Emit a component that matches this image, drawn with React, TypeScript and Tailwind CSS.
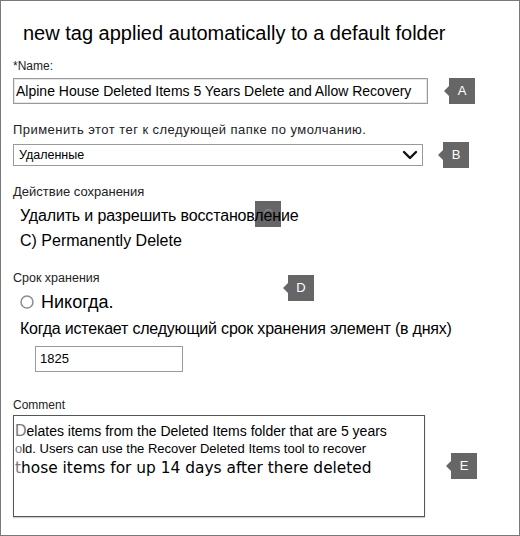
import React from "react";

function Badge({ letter, className = "", notch = true }: { letter: string; className?: string; notch?: boolean }) {
  return (
    <div className={"relative flex h-[26px] w-[26px] shrink-0 items-center justify-center bg-[#666666] text-[13px] " + (className || "text-white")}>
      {notch && (
        <span className="absolute left-[-5px] top-1/2 -translate-y-1/2 border-y-[5px] border-r-[5px] border-y-transparent border-r-[#666666]" />
      )}
      {letter}
    </div>
  );
}

function Chevron() {
  return (
    <svg width="16" height="10" viewBox="0 0 16 10" className="shrink-0">
      <polyline points="2,2 8,8 14,2" fill="none" stroke="#111" strokeWidth="2.4" strokeLinecap="round" strokeLinejoin="round" />
    </svg>
  );
}

export default function App() {
  return (
    <div className="box-border h-[536px] w-[520px] overflow-hidden border border-[#7a7a7a] bg-white font-['Liberation_Sans',Arial,sans-serif] text-black">
      <div className="pl-[12px]">
        <h1 className="pl-[10px] pt-[19px] text-[20px] leading-[26px]">new tag applied automatically to a default folder</h1>

        <div className="mt-[12px] text-[12px] leading-[16px] text-[#222]">*Name:</div>
        <div className="mt-[4px] flex items-center gap-[21px]">
          <div className="box-border flex h-[26px] w-[415px] items-center border border-[#9a9a9a] pl-[2px] text-[14px] shadow-[inset_0_0_0_1px_#e6e6e6]">
            Alpine House Deleted Items 5 Years Delete and Allow Recovery
          </div>
          <Badge letter="A" />
        </div>

        <div className="mt-[18px] text-[13px] leading-[16px] tracking-[0.45px] text-[#222]">Применить этот тег к следующей папке по умолчанию.</div>
        <div className="mt-[4px] flex items-center gap-[20px]">
          <div className="box-border flex h-[22px] w-[410px] items-center justify-between border border-[#9a9a9a] pl-[5px] pr-[4px] text-[12.5px]">
            <span>Удаленные</span>
            <Chevron />
          </div>
          <Badge letter="B" />
        </div>

        <div className="mt-[16px] text-[13px] leading-[16px] text-[#222]">Действие сохранения</div>
        <div className="relative mt-[5px] pl-[7px] text-[16px] leading-[22px] tracking-[-0.15px]">
          <div className="absolute left-[242px] top-[-4px]">
            <Badge letter="C" notch={false} className="text-[#8a8a8a]" />
          </div>
          <span className="relative">Удалить и разрешить восстановление</span>
        </div>
        <div className="mt-[4px] pl-[7px] text-[16px] leading-[20px]">C) Permanently Delete</div>

        <div className="relative mt-[19px] text-[12.5px] leading-[16px] text-[#222]">
          Срок хранения
          <div className="absolute left-[275px] top-[5px]">
            <Badge letter="D" />
          </div>
        </div>
        <div className="mt-[4px] flex items-center gap-[7px] pl-[7px] text-[18px] leading-[24px]">
          <svg width="14" height="14" viewBox="0 0 14 14">
            <circle cx="7" cy="7" r="6" fill="#fff" stroke="#8c8c8c" strokeWidth="1.5" />
          </svg>
          <span>Никогда.</span>
        </div>
        <div className="mt-[4px] pl-[7px] text-[16px] leading-[22px] tracking-[-0.2px]">
          Когда истекает следующий срок хранения элемент (в днях)
        </div>
        <div className="ml-[22px] mt-[6px] box-border flex h-[26px] w-[148px] items-center border border-[#9a9a9a] pl-[4px] text-[13px]">
          1825
        </div>

        <div className="mt-[25px] text-[12px] leading-[16px] text-[#222]">Comment</div>
        <div className="mt-[2px] flex items-center gap-[26px]">
          <div className="box-border h-[102px] w-[412px] border border-[#555555] pl-[1px] pt-[6px] shadow-[0_1px_1px_#cfcfcf]">
            <div className="text-[14px] leading-[18px]">
              <span className="text-[16px] text-[#777]">D</span>elates items from the Deleted Items folder that are 5 years
            </div>
            <div className="text-[13px] leading-[17px]">
              <span className="text-[#777]">o</span>ld. Users can use the Recover Deleted Items tool to recover
            </div>
            <div className="mt-[1px] font-['DejaVu_Sans',sans-serif] text-[15.4px] leading-[20px]">
              <span className="text-[#777]">t</span>hose items for up 14 days after there deleted
            </div>
          </div>
          <Badge letter="E" />
        </div>
      </div>
    </div>
  );
}
